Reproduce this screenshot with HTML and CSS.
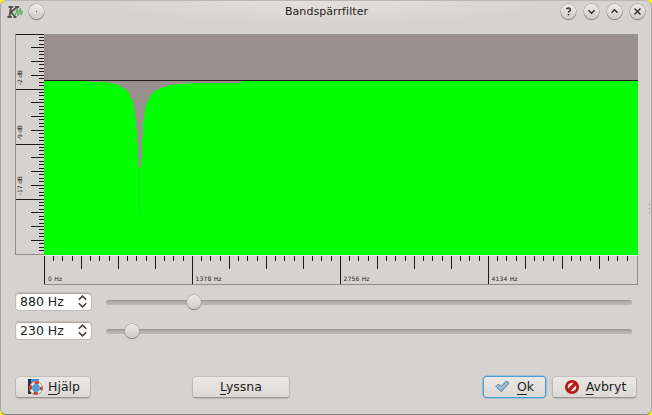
FILE: index.html
```html
<!DOCTYPE html>
<html lang="sv">
<head>
<meta charset="utf-8">
<title>Bandspärrfilter</title>
<link rel="stylesheet" href="styles.css">
</head>
<body>
<div class="window">
  <header class="titlebar">
    <div class="title-left">
      <svg class="app-icon" width="18" height="16" viewBox="0 0 18 16">
        <path d="M5 3 3.4 13M2.6 3h4.6M1.4 13h4.4M11 3 5 8l4 5M9 3h4M7.5 13h3" fill="none" stroke="#55524e" stroke-width="1.8"/>
        <path d="M9 12l2.4-8 .6 8 2.4-8 .6 7 1.6-4" fill="none" stroke="#5fae5d" stroke-width="1.2"/>
      </svg>
      <button class="round" aria-label="Meny"><span class="dot"></span></button>
    </div>
    <h1>Bandspärrfilter</h1>
    <div class="title-right">
      <button class="round" aria-label="Hjälp">
        <svg width="15" height="15" viewBox="0 0 15 15"><path d="M5.5 5.2Q5.8 4 7.5 4T9.5 5.6Q9.5 6.5 8.4 7.1T7.5 8.7M7.5 9.9v1.3"/></svg>
      </button>
      <button class="round" aria-label="Minimera">
        <svg width="15" height="15" viewBox="0 0 15 15"><path d="M4.5 6.2l3 3 3-3"/></svg>
      </button>
      <button class="round" aria-label="Maximera">
        <svg width="15" height="15" viewBox="0 0 15 15"><path d="M4.5 8.8l3-3 3 3"/></svg>
      </button>
      <button class="round" aria-label="Stäng">
        <svg width="15" height="15" viewBox="0 0 15 15"><path d="M4.5 4.5l6 6M10.5 4.5l-6 6"/></svg>
      </button>
    </div>
  </header>

  <main>
    <section class="response">
      <svg class="ruler-db" width="29" height="221" shape-rendering="crispEdges">
        <defs>
          <pattern id="db" width="29" height="55" patternUnits="userSpaceOnUse">
            <path class="tick" d="M0 0h29v1H0zM16 13h13v1H16zM16 27h13v1H16zM16 41h13v1H16zM24 3h5v1h-5zM24 6h5v1h-5zM24 10h5v1h-5zM24 17h5v1h-5zM24 20h5v1h-5zM24 24h5v1h-5zM24 30h5v1h-5zM24 34h5v1h-5zM24 37h5v1h-5zM24 44h5v1h-5zM24 48h5v1h-5zM24 51h5v1h-5z"/>
          </pattern>
        </defs>
        <rect width="29" height="220" fill="url(#db)"/>
        <path class="edge" d="M0 0h1v220h28v1H0z"/>
        <text transform="translate(7 51) rotate(-90)" textLength="15">-2 dB</text>
        <text transform="translate(7 106) rotate(-90)" textLength="15">-9 dB</text>
        <text transform="translate(7 161) rotate(-90)" textLength="19">-17 dB</text>
      </svg>
      <svg class="plot" width="594" height="221" shape-rendering="crispEdges">
        <rect width="594" height="221" fill="#998f8c"/>
        <path fill="#0f0" d="M0 221V47H44V48H63V49H69V50H73V51H76V53H78V54H81V56H83V58H85V61H86V64H88V68H89V73H90V77H91V84H92V95H93V109H94V133H95.5V187H96V133H97V124H98V104H99V87H100V79H101V73H102V70H103V67H105V63H106V61H108V59H110V57H112V56H114V55H116V54H119V53H122V52H124V51H131V50H144V49H197V47H594V221z"/>
        <path fill="#26d724" d="M95 133h1v48h-1z"/>
        <path fill="#231c1a" d="M0 46h594v1H0z"/>
      </svg>
      <svg class="ruler-hz" width="594" height="30" shape-rendering="crispEdges">
        <defs>
          <pattern id="hz" width="148" height="30" patternUnits="userSpaceOnUse">
            <path class="tick" d="M0 1h1v29H0zM37 1h1v13h-1zM74 1h1v13h-1zM111 1h1v13h-1zM9 1h1v5h-1zM18 1h1v5h-1zM28 1h1v5h-1zM46 1h1v5h-1zM55 1h1v5h-1zM65 1h1v5h-1zM83 1h1v5h-1zM92 1h1v5h-1zM102 1h1v5h-1zM120 1h1v5h-1zM129 1h1v5h-1zM139 1h1v5h-1z"/>
          </pattern>
        </defs>
        <rect width="591" height="29" fill="url(#hz)"/>
        <path fill="#e8e6e3" d="M0 0h594v1H0z"/>
        <path class="edge" d="M0 29h593V1h1v29H0z"/>
        <text x="4" y="26" textLength="14">0 Hz</text>
        <text x="151.5" y="26" textLength="26">1378 Hz</text>
        <text x="299.5" y="26" textLength="26">2756 Hz</text>
        <text x="447.5" y="26" textLength="26">4134 Hz</text>
      </svg>
    </section>

    <section class="controls">
      <div class="control">
        <div class="spin"><span>880 Hz</span>
          <svg width="9" height="13" viewBox="0 0 9 13"><path d="M.8 4.8 4.5 1.1l3.7 3.7M.8 8.2l3.7 3.7 3.7-3.7"/></svg>
        </div>
        <div class="slider first"><i class="groove"></i><i class="knob"></i></div>
      </div>
      <div class="control">
        <div class="spin"><span>230 Hz</span>
          <svg width="9" height="13" viewBox="0 0 9 13"><path d="M.8 4.8 4.5 1.1l3.7 3.7M.8 8.2l3.7 3.7 3.7-3.7"/></svg>
        </div>
        <div class="slider second"><i class="groove"></i><i class="knob"></i></div>
      </div>
    </section>

    <footer>
      <button class="btn help">
        <svg width="16" height="16" viewBox="0 0 16 16">
          <path fill="#292f38" d="M1 0h3v15H1z"/><path fill="#498fcb" d="M4 0h8v14H4z"/>
          <circle cx="9" cy="9" r="5.3" fill="#4b9fd9" stroke="#f5eee9" stroke-width="2.8"/>
          <circle cx="9" cy="9" r="5.3" fill="none" stroke="#c5442f" stroke-width="2.6" stroke-dasharray="4.3 4.025" stroke-dashoffset="2.1"/>
          <circle cx="9" cy="9" r="6.6" fill="none" stroke="#b3543f" stroke-width=".6"/>
        </svg>
        <span><u>H</u>jälp</span>
      </button>
      <button class="btn listen"><span><u>L</u>yssna</span></button>
      <button class="btn ok">
        <svg width="15" height="13" viewBox="0 0 15 13"><path d="M1 6.5 3.5 4 6 6.6 11.5 1 14 3.2 6.2 11.7z" fill="#9bbdd4" stroke="#4e7490"/></svg>
        <span><u>O</u>k</span>
      </button>
      <button class="btn cancel">
        <svg width="14" height="14" viewBox="0 0 14 14"><circle cx="7" cy="7" r="7" fill="#b31c17"/><circle cx="7" cy="7" r="4.3" fill="#eee1dd"/><path d="M3.6 10.4l6.8-6.8" stroke="#b31c17" stroke-width="3.4"/></svg>
        <span><u>A</u>vbryt</span>
      </button>
    </footer>
  </main>
  <i class="grip"></i>
</div>
</body>
</html>
```
FILE: styles.css
```css
* { box-sizing: border-box; }
body { margin: 0; background: #ff0; font-family: "DejaVu Sans", sans-serif; color: #221f1d; }
button { font: inherit; color: inherit; padding: 0; margin: 0; }
svg { display: block; flex: none; }
.window {
  position: relative; width: 652px; height: 415px; padding: 0 13px 0 14px;
  border: 1px solid #a9a5a2; border-top-color: #bbb7b4; border-bottom: 1px solid #858280;
  border-radius: 6px;
  background: radial-gradient(ellipse 240px 24px at 50% 0, #e3e0dd, #d6d2cf) #d6d2cf;
}
.titlebar {
  display: grid; grid-template-columns: 90px 1fr 90px; height: 33px;
  margin: 0 -8px 0 -10px; align-items: start;
}
.title-left, .title-right { display: flex; padding-top: 3px; }
.title-left { gap: 5px; }
.title-right { justify-content: flex-end; gap: 8px; padding-right: 1px; }
.app-icon { margin-left: 1px; }
h1 { margin: 3px 0 0; padding-left: 2px; font-size: 11px; line-height: 15px; font-weight: 400; text-align: center; letter-spacing: .07px; }
.round {
  width: 15px; height: 15px; border: 0; border-radius: 50%;
  display: grid; place-items: center; background: linear-gradient(#ededeb, #cfcbc8);
  box-shadow: 0 0 0 .5px #8f8b88, 0 1px 1px #7b7774;
}
.round path { fill: none; stroke: #2c2927; stroke-width: 1.4; }
.dot { width: 1px; height: 1px; background: #555; }
.response { display: grid; grid-template-columns: 29px 594px; grid-template-rows: 221px 30px; }
.ruler-hz { grid-column: 2; }
.tick { fill: #1d1a18; }
.edge { fill: #918c89; }
.response text { font-size: 6px; fill: #292522; }
.controls { display: grid; gap: 11px; margin-top: 8px; }
.control { display: flex; height: 18px; }
.spin {
  width: 75px; height: 17px; margin-left: 1px; padding: 0 4px; display: flex; align-items: center;
  justify-content: space-between; font-size: 12.5px; background: #fff; border-radius: 3px;
  box-shadow: 0 0 0 1px #c1bcb8, inset 0 1px 1px #aaa49f;
}
.spin path { fill: none; stroke: #46413e; stroke-width: 1.6; }
.slider { position: relative; width: 526px; margin-left: 15px; height: 18px; display: flex; align-items: center; }
.groove { width: 100%; height: 5px; border-radius: 3px; background: linear-gradient(#96918d, #b3aeab 40%, #bbb7b4); }
.knob {
  position: absolute; top: 2px; width: 14px; height: 14px; border-radius: 50%;
  background: linear-gradient(#eae8e6, #d0ccc9); box-shadow: 0 0 0 .5px #999490, 0 1px 1px #716c69;
}
.first .knob { left: 80.5px; }
.second .knob { left: 18.5px; }
footer { display: flex; margin-top: 36px; height: 21px; align-items: center; }
.btn {
  height: 20px; border: 0; border-radius: 3px; display: flex; align-items: center;
  justify-content: center; gap: 7px; font-size: 12.5px; line-height: 18px;
  background: linear-gradient(#eae8e6, #dcd8d5); box-shadow: 0 0 0 .5px #b5b0ac, 0 1px 1.5px #6a6663;
}
.btn u { text-decoration: underline; text-underline-offset: 3px; text-decoration-thickness: 1px; }
.help { width: 74px; margin-left: 1px; gap: 5px; padding-left: 1px; }
.listen { width: 96px; margin-left: 103px; }
.ok { width: 61px; margin-left: 195px; box-shadow: 0 0 0 1.3px #4ba0cf, 0 0 2px 1px #6fb8df; }
.cancel { width: 83px; margin-left: 8px; padding-left: 2px; }
.grip { position: absolute; right: 1px; top: 203px; width: 1px; height: 9px; background: repeating-linear-gradient(#86817e 0 1px, transparent 1px 4px); }
```
